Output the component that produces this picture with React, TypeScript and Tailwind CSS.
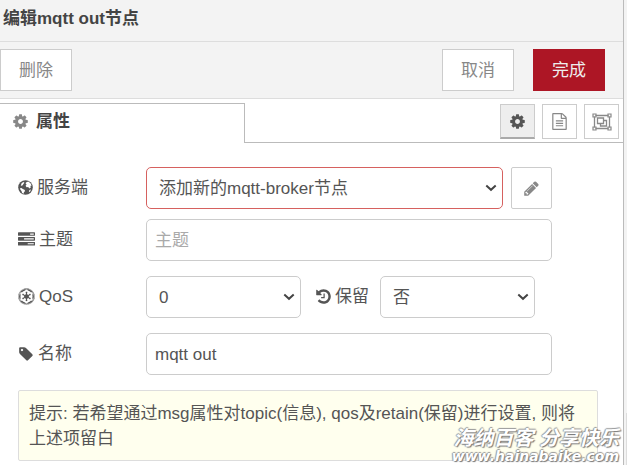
import type { ReactNode, SVGProps } from "react";
import { FaEmpire } from "react-icons/fa";

function Glyph({ d, ...rest }: { d: string } & SVGProps<SVGSVGElement>) {
  return (
    <svg viewBox="0 0 1792 1792" fill="currentColor" aria-hidden="true" {...rest}>
      <path d={d} />
    </svg>
  );
}

const COG =
  "M1152 896q0-106-75-181t-181-75-181 75-75 181 75 181 181 75 181-75 75-181zm512-109v222q0 12-8 23t-20 13l-185 28q-19 54-39 91 35 50 107 138 10 12 10 25t-9 23q-27 37-99 108t-94 71q-12 0-26-9l-138-108q-44 23-91 38-16 136-29 186-7 28-36 28h-222q-14 0-24.5-8.5t-11.5-21.5l-28-184q-49-16-90-37l-141 107q-10 9-25 9-14 0-25-11-126-114-165-168-7-10-7-23 0-12 8-23 15-21 51-66.5t54-70.5q-27-50-41-99l-183-27q-13-2-21-12.5t-8-23.5v-222q0-12 8-23t19-13l186-28q14-46 39-92-40-57-107-138-10-12-10-24 0-10 9-23 26-36 98.5-107.5t94.5-71.5q13 0 26 10l138 107q44-23 91-38 16-136 29-186 7-28 36-28h222q14 0 24.5 8.5t11.5 21.5l28 184q49 16 90 37l142-107q9-9 24-9 13 0 25 10 129 119 165 170 7 8 7 22 0 12-8 23-15 21-51 66.5t-54 70.5q26 50 41 98l183 28q13 2 21 12.5t8 23.5z";
const PENCIL =
  "M491 1536l91-91-235-235-91 91v107h128v128h107zm523-928q0-22-22-22-10 0-17 7l-542 542q-7 7-7 17 0 22 22 22 10 0 17-7l542-542q7-7 7-17zm-54-192l416 416-832 832h-416v-416zm683 96q0 53-37 90l-166 166-416-416 166-165q36-38 90-38 53 0 91 38l235 234q37 39 37 91z";
const TASKS =
  "M1024 1408h640v-128h-640v128zm-384-512h1024v-128h-1024v128zm640-512h384v-128h-384v128zm512 832v256q0 26-19 45t-45 19h-1664q-26 0-45-19t-19-45v-256q0-26 19-45t45-19h1664q26 0 45 19t19 45zm0-512v256q0 26-19 45t-45 19h-1664q-26 0-45-19t-19-45v-256q0-26 19-45t45-19h1664q26 0 45 19t19 45zm0-512v256q0 26-19 45t-45 19h-1664q-26 0-45-19t-19-45v-256q0-26 19-45t45-19h1664q26 0 45 19t19 45z";
const TAG =
  "M576 448q0-53-37.5-90.5t-90.5-37.5-90.5 37.5-37.5 90.5 37.5 90.5 90.5 37.5 90.5-37.5 37.5-90.5zm1067 576q0 53-37 90l-491 492q-39 37-91 37-53 0-90-37l-715-716q-38-37-64.5-101t-26.5-117v-416q0-52 38-90t90-38h416q53 0 117 26.5t102 64.5l715 714q37 39 37 91z";
const HISTORY =
  "M1664 896q0 156-61 298t-164 245-245 164-298 61q-172 0-327-72.5t-264-204.5q-7-10-6.5-22.5t8.5-20.5l137-138q10-9 25-9 16 2 23 12 73 95 179 147t225 52q104 0 198.5-40.5t163.5-109.5 109.5-163.5 40.5-198.5-40.5-198.5-109.5-163.5-163.5-109.5-198.5-40.5q-98 0-188 35.5t-160 101.5l137 138q31 30 14 69-17 40-59 40h-448q-26 0-45-19t-19-45v-448q0-42 40-59 39-17 69 14l130 129q107-101 244.5-156.5t284.5-55.5q156 0 298 61t245 164 164 245 61 298zm-640-288v448q0 14-9 23t-23 9h-320q-14 0-23-9t-9-23v-64q0-14 9-23t23-9h224v-352q0-14 9-23t23-9h64q14 0 23 9t9 23z";
const FILE_TEXT =
  "M1596 380q28 28 48 76t20 88v1152q0 40-28 68t-68 28h-1344q-40 0-68-28t-28-68v-1600q0-40 28-68t68-28h896q40 0 88 20t76 48zm-444-244v376h376q-10-29-22-41l-313-313q-12-12-41-22zm384 1528v-1024h-416q-40 0-68-28t-28-68v-416h-768v1536h1280zm-1024-864q0-14 9-23t23-9h704q14 0 23 9t9 23v64q0 14-9 23t-23 9h-704q-14 0-23-9t-9-23v-64zm736 224q14 0 23 9t9 23v64q0 14-9 23t-23 9h-704q-14 0-23-9t-9-23v-64q0-14 9-23t23-9h704zm0 256q14 0 23 9t9 23v64q0 14-9 23t-23 9h-704q-14 0-23-9t-9-23v-64q0-14 9-23t23-9h704z";

function GlobeIcon() {
  return (
    <svg viewBox="0 0 15 15" className="size-[15px] shrink-0" aria-hidden="true">
      <circle cx="7.5" cy="7.5" r="7.3" fill="#555" />
      <path fill="#fff" d="M2 8.2 3.4 8l1.4.9 1.7.8.6 1.2-1.2 1.3-.2 1.5-1.6-.8-.6-1.9-1.2-1.4zM3.6 3.2 5.4 2l1 .8-1 1.2-1 1.6-1.6.2z" />
      <path fill="#fff" d="m8 2.4 2.2-.9 2.3 1.7 1.1 2.4-1.2.4.4 1.4-1.3 1-1.4-1.4-1.5.2-1-1.4 1-1.4-1-.8z" />
      <path fill="#fff" d="m11.4 10 1.6-.6-.9 2-1.3.9z" />
    </svg>
  );
}

function ObjectGroupIcon() {
  return (
    <svg viewBox="0 0 20 18" className="h-[18px] w-5" fill="none" stroke="currentColor" aria-hidden="true">
      <path d="M3.5 2.5h13M3.5 15.5h13M2.5 3.5v11M17.5 3.5v11" strokeWidth="1.3" />
      <path d="M1 1h3v3H1zM16 1h3v3h-3zM1 14h3v3H1zM16 14h3v3h-3z" strokeWidth="1.2" />
      <path d="M5.5 5h6v5.5h-6zM11.5 7.5h3v5.5h-6v-2.5" strokeWidth="1.3" />
    </svg>
  );
}

const field = "h-[42px] rounded-[5px] border bg-white pt-[2px] text-[17px] text-[#555] outline-none";
const label = "flex w-32 shrink-0 items-center gap-1 pb-px";
const headerButton = "h-[42px] w-[72px] border pt-[2px] text-[17px]";

function SelectBox({ id, options, className }: { id: string; options: string[]; className: string }) {
  return (
    <span className="grid items-center">
      <select id={id} className={`${field} ${className} col-start-1 row-start-1 appearance-none pr-8 pl-3`}>
        {options.map((option) => (
          <option key={option}>{option}</option>
        ))}
      </select>
      <svg
        viewBox="0 0 12 8"
        className="pointer-events-none col-start-1 row-start-1 mr-[6px] h-2 w-3 justify-self-end"
        fill="none"
        stroke="#444"
        strokeWidth="2"
        aria-hidden="true"
      >
        <path d="m1.3 1.6 4.7 4.2 4.7-4.2" />
      </svg>
    </span>
  );
}

function IconTab({ title, active = false, children }: { title: string; active?: boolean; children: ReactNode }) {
  return (
    <button
      type="button"
      aria-label={title}
      className={
        active
          ? "flex size-[35px] items-center justify-center border border-b-2 border-[#ccc] border-b-[#aaa] bg-[#eee] text-[#555]"
          : "flex size-[35px] items-center justify-center border border-[#ccc] bg-white text-[#888]"
      }
    >
      {children}
    </button>
  );
}

export default function App() {
  return (
    <div className="flex min-h-screen overflow-hidden bg-[#f3f3f3] font-['Liberation_Sans','Noto_Sans_CJK_SC',sans-serif] text-[17px] leading-6 text-[#555]">
      <main className="relative min-w-0 flex-1 border-r border-[#bbb] bg-white">
        <h1 className="h-[42px] border-b border-[#ddd] bg-[#f3f3f3] px-[3px] pt-[7px] font-bold text-[#444]">编辑mqtt out节点</h1>
        <div className="flex h-[57px] items-center border-b border-[#ddd] bg-[#f3f3f3] pr-[18px]">
          <button type="button" className={`${headerButton} mr-auto border-[#ccc] bg-white text-[#888]`}>删除</button>
          <button type="button" className={`${headerButton} mr-[19px] border-[#ccc] bg-white text-[#888]`}>取消</button>
          <button type="button" className={`${headerButton} border-[#ad1625] bg-[#ad1625] text-[#eee]`}>完成</button>
        </div>

        <div className="flex pt-1">
          <h2 className="flex h-10 w-[245px] items-center gap-[7px] border-t border-r border-[#bbb] pb-1 pl-3 font-bold text-[#444]">
            <Glyph d={COG} className="size-[17px] text-[#888]" />
            属性
          </h2>
          <div className="flex flex-1 justify-end gap-[7px] border-b border-[#bbb] pr-1 pt-px">
            <IconTab title="属性" active>
              <Glyph d={COG} className="size-[17px]" />
            </IconTab>
            <IconTab title="描述">
              <Glyph d={FILE_TEXT} className="size-[17px]" />
            </IconTab>
            <IconTab title="外观">
              <ObjectGroupIcon />
            </IconTab>
          </div>
        </div>

        <form className="px-[18px] pt-6">
          <div className="flex items-center">
            <label htmlFor="broker" className={label}>
              <GlobeIcon />
              服务端
            </label>
            <SelectBox id="broker" className="w-[357px] border-[#d6615f]" options={["添加新的mqtt-broker节点"]} />
            <button type="button" aria-label="编辑服务端" className="ml-2 flex h-[42px] w-[41px] items-center justify-center rounded-[2px] border border-[#ccc] text-[#888]">
              <Glyph d={PENCIL} className="size-[17px]" />
            </button>
          </div>
          <div className="mt-[10px] flex items-center">
            <label htmlFor="topic" className={label}>
              <Glyph d={TASKS} className="size-[17px]" />
              主题
            </label>
            <input id="topic" placeholder="主题" className={`${field} w-[406px] border-[#ccc] px-2 placeholder:text-[#aaa]`} />
          </div>
          <div className="mt-[15px] flex items-center">
            <label htmlFor="qos" className={label}>
              <FaEmpire className="size-[17px]" />
              QoS
            </label>
            <SelectBox id="qos" className="w-[155px] border-[#ccc]" options={["0", "1", "2"]} />
            <label htmlFor="retain" className="ml-[14px] flex w-[65px] items-center gap-[3px] pb-px">
              <Glyph d={HISTORY} className="size-[17px]" />
              保留
            </label>
            <SelectBox id="retain" className="w-[155px] border-[#ccc]" options={["否", "是"]} />
          </div>
          <div className="mt-[15px] flex items-center">
            <label htmlFor="name" className={label}>
              <Glyph d={TAG} className="size-4" />
              名称
            </label>
            <input id="name" defaultValue="mqtt out" className={`${field} w-[406px] border-[#ccc] px-2`} />
          </div>
          <p className="mt-[15px] mr-[7px] rounded-[2px] border border-[#ddd] bg-[#ffffee] px-[10px] pt-[10px] pb-[9px] leading-[25px]">
            提示: 若希望通过msg属性对topic(信息), qos及retain(保留)进行设置, 则将上述项留白
          </p>
        </form>
        <div className="absolute right-1 bottom-[2px] text-right font-bold whitespace-nowrap text-white italic [text-shadow:1px_1px_1px_#777,-1px_0_1px_#999,0_-1px_1px_#999]">
          <div className="text-[20px] leading-[22px]">海纳百客 分享快乐</div>
          <div className="font-['DejaVu_Sans',sans-serif] text-[14px] leading-[14px]">www.hainabaike.com</div>
        </div>
      </main>
      <div className="flex w-[3px] shrink-0 items-end justify-end">
        <div className="h-[52px] w-px bg-[#ddd]" />
      </div>
    </div>
  );
}
